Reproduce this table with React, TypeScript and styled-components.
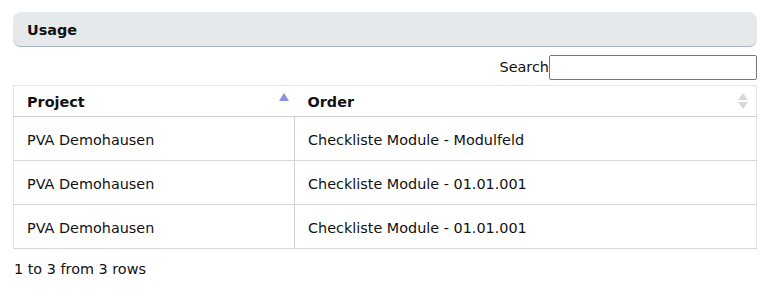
import React from "react";
import styled, { createGlobalStyle } from "styled-components";

const Global = createGlobalStyle`
  html, body { margin: 0; padding: 0; background: #fff; }
  body {
    font-family: "DejaVu Sans", Verdana, sans-serif;
    font-size: 14.4px;
    color: #111;
  }
`;

const Page = styled.div`
  padding: 12px 19px 0 13px;
  width: 744px;
`;

const PanelHeader = styled.div`
  height: 35px;
  display: flex;
  align-items: center;
  padding: 1px 14px 0;
  box-sizing: border-box;
  background: #e6e9ec;
  border-radius: 8px;
  border-bottom: 1px solid #a9b4c2;
  font-weight: bold;
`;

const SearchRow = styled.label`
  display: flex;
  justify-content: flex-end;
  align-items: center;
  margin-top: 7px;
  height: 26px;
`;

const SearchInput = styled.input`
  width: 202px;
  height: 21px;
  margin: 0;
  padding: 1px 2px;
  border: 1px solid #767676;
  border-radius: 2px;
  font: inherit;
`;

const Table = styled.table`
  width: 100%;
  margin-top: 5px;
  table-layout: fixed;
  border-collapse: collapse;
  border: 1px solid #e3e3e8;
`;

const HeadCell = styled.th<{ $w?: string }>`
  position: relative;
  height: 31px;
  padding: 2px 30px 0 13px;
  box-sizing: border-box;
  text-align: left;
  font-weight: bold;
  border-bottom: 1px solid #cfcfcf;
  width: ${(p) => p.$w || "auto"};
`;

const SortIcon = styled.svg`
  position: absolute;
  top: 50%;
  transform: translateY(-50%);
`;

const Cell = styled.td`
  height: 44px;
  padding: 2px 13px 0;
  box-sizing: border-box;
  border-bottom: 1px solid #d6d6d6;
  white-space: nowrap;
  & + & { border-left: 1px solid #cfcfcf; }
`;

const Footer = styled.div`
  margin-top: 12px;
  padding-left: 1px;
`;

const rows = [
  ["PVA Demohausen", "Checkliste Module - Modulfeld"],
  ["PVA Demohausen", "Checkliste Module - 01.01.001"],
  ["PVA Demohausen", "Checkliste Module - 01.01.001"],
];

export default function App() {
  return (
    <Page>
      <Global />
      <PanelHeader>Usage</PanelHeader>
      <SearchRow>
        Search
        <SearchInput type="text" />
      </SearchRow>
      <Table>
        <thead>
          <tr>
            <HeadCell $w="281px">
              Project
              <SortIcon width="12" height="10" viewBox="0 0 12 10" style={{ right: 5, marginTop: -4 }}>
                <polygon points="6,1 11,9 1,9" fill="#8d8fe0" />
              </SortIcon>
            </HeadCell>
            <HeadCell>
              Order
              <SortIcon width="12" height="18" viewBox="0 0 12 18" style={{ right: 7 }}>
                <polygon points="6,1 11,8 1,8" fill="#d8d8d8" />
                <polygon points="1,10 11,10 6,17" fill="#d8d8d8" />
              </SortIcon>
            </HeadCell>
          </tr>
        </thead>
        <tbody>
          {rows.map((r, i) => (
            <tr key={i}>
              <Cell>{r[0]}</Cell>
              <Cell>{r[1]}</Cell>
            </tr>
          ))}
        </tbody>
      </Table>
      <Footer>1 to 3 from 3 rows</Footer>
    </Page>
  );
}
